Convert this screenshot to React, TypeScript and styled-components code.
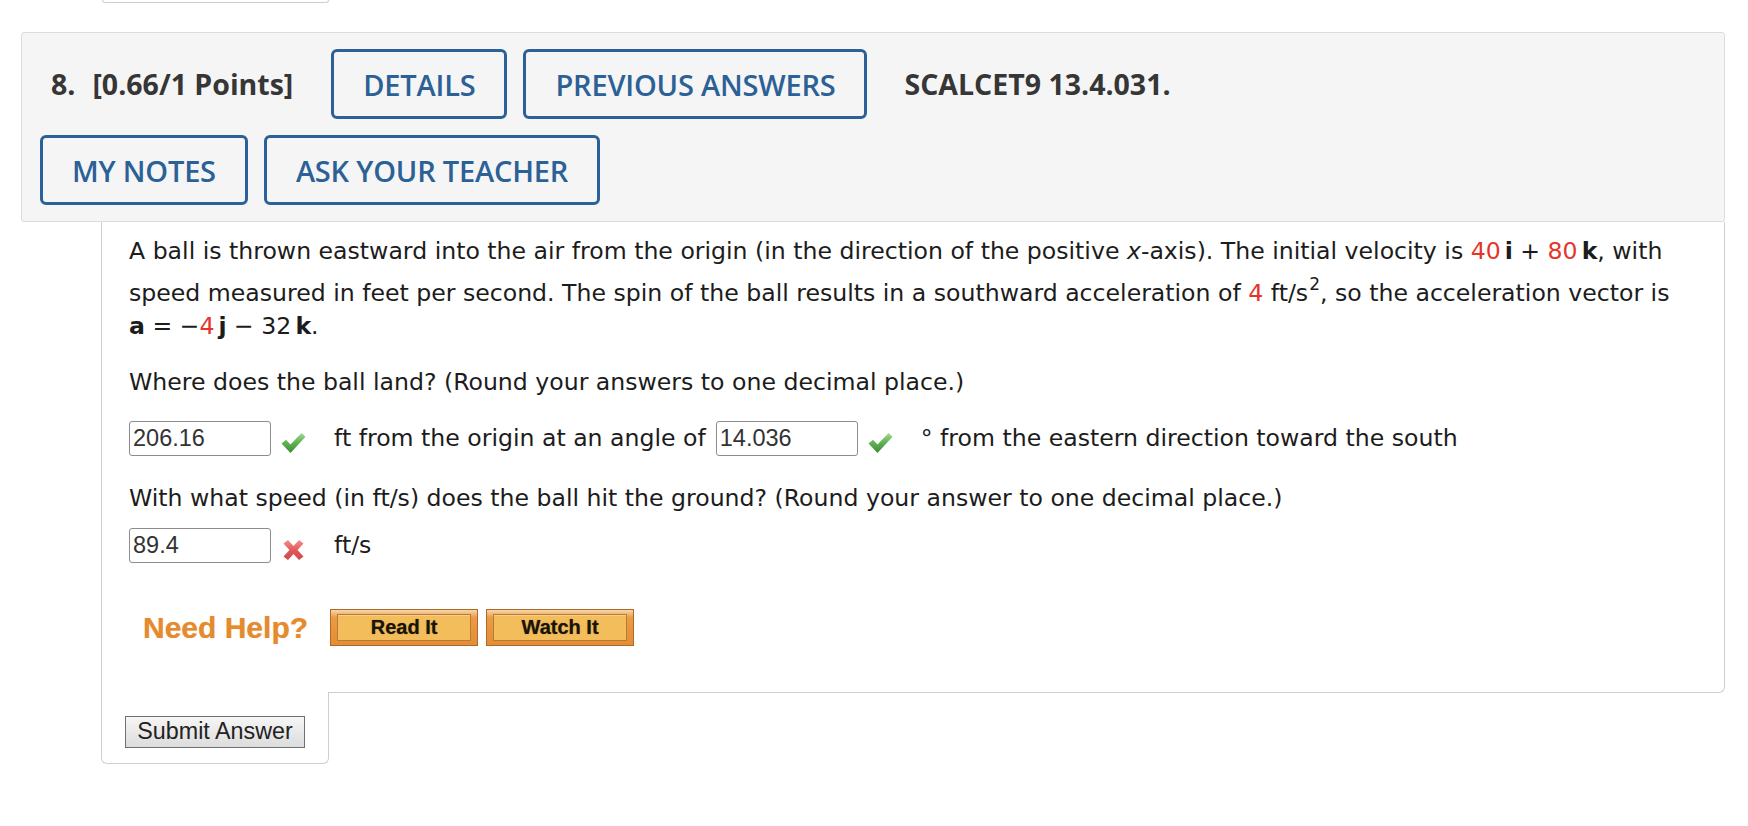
import React from "react";
import styled, { createGlobalStyle } from "styled-components";

const Global = createGlobalStyle`
  html, body { margin: 0; padding: 0; background: #ffffff; }
  body { font-family: "DejaVu Sans", Verdana, sans-serif; }
`;

const Page = styled.div`
  width: 1748px;
  min-height: 826px;
  background: #fff;
`;

const PrevTab = styled.div`
  box-sizing: border-box;
  margin-left: 102px;
  width: 227px;
  height: 3px;
  border: 1px solid #cfcfcf;
  border-top: none;
  border-radius: 0 0 6px 6px;
`;

const Question = styled.section`
  margin: 29px 0 0 21px;
  width: 1704px;
`;

const Header = styled.div`
  box-sizing: border-box;
  background: #f5f5f5;
  border: 1px solid #dcdcdc;
  border-radius: 3px;
  padding: 16px 18px;
  display: flex;
  flex-direction: column;
  gap: 16px;
  position: relative;
  z-index: 1;
`;

const HeaderRow = styled.div<{ $indent?: number }>`
  display: flex;
  align-items: center;
  padding-left: ${(p) => p.$indent ?? 0}px;
`;

const Label = styled.span<{ $gap?: number }>`
  font-family: "Open Sans", sans-serif;
  font-weight: 700;
  font-size: 28.5px;
  color: #363636;
  margin-right: ${(p) => p.$gap ?? 0}px;
  white-space: nowrap;
`;

const OutlineButton = styled.button<{ $gap?: number }>`
  box-sizing: border-box;
  height: 70px;
  padding: 0 29px;
  border: 3px solid #2b6196;
  border-radius: 6px;
  background: #f5f5f5;
  color: #2b6196;
  font-family: "Open Sans", sans-serif;
  font-weight: 600;
  font-size: 29px;
  letter-spacing: -0.2px;
  margin-right: ${(p) => p.$gap ?? 0}px;
  white-space: nowrap;
  cursor: pointer;
`;

const Body = styled.div`
  margin-left: 80px;
  width: 1624px;
`;

const Content = styled.div`
  box-sizing: border-box;
  border: 1px solid #cfcfcf;
  border-top: none;
  border-radius: 0 0 6px 0;
  padding: 13px 28px 46px 27px;
  color: #1c1c1c;
  font-family: "DejaVu Sans", Verdana, sans-serif;
  font-size: 23.6px;
  line-height: 33px;
`;

const Para = styled.p<{ $mt?: number }>`
  margin: ${(p) => p.$mt ?? 0}px 0 0 0;
`;

const Red = styled.span`
  color: #e5352a;
`;

const Vec = styled.b`
  font-weight: 700;
  margin-left: 4px;
`;

const NoWrap = styled.span`
  white-space: nowrap;
`;

const Sup = styled.sup`
  font-size: 17px;
  line-height: 33px;
  vertical-align: 10.5px;
  margin-left: 1px;
`;

const AnswerRow = styled.div<{ $mt?: number }>`
  display: flex;
  align-items: center;
  height: 40px;
  margin-top: ${(p) => p.$mt ?? 0}px;
  white-space: nowrap;
`;

const AnswerInput = styled.input`
  box-sizing: border-box;
  width: 142px;
  height: 35px;
  padding: 0 3px;
  border: 1px solid #8c8c8c;
  border-radius: 3px;
  background: #fff;
  font-family: "Liberation Sans", Arial, sans-serif;
  font-size: 23.5px;
  color: #333;
  outline: none;
`;

const Mark = styled.span`
  display: inline-flex;
  width: 25px;
  height: 22px;
  margin: 9px 28px 0 10px;
`;

const Gap = styled.span`
  display: inline-block;
  width: 10px;
`;

const HelpRow = styled.div`
  display: flex;
  align-items: center;
  margin-top: 43px;
  padding-left: 14px;
  gap: 8px;
`;

const NeedHelp = styled.span`
  font-family: "Liberation Sans", Arial, sans-serif;
  font-weight: 700;
  font-size: 30px;
  line-height: 37px;
  color: #e58b2f;
  margin-right: 14px;
  text-shadow: 0 0 1px rgba(227, 138, 48, 0.6);
`;

const HelpButton = styled.button`
  box-sizing: border-box;
  width: 148px;
  height: 37px;
  padding: 4px 6px;
  border: 1px solid #a86b2d;
  background: linear-gradient(#f9d6a6 0%, #eb9a45 22%, #e58d34 100%);
  display: flex;
  cursor: pointer;
`;

const HelpInner = styled.span`
  flex: 1;
  display: flex;
  align-items: center;
  justify-content: center;
  background: #f4bd5b;
  border: 1px solid #b57b3c;
  box-shadow: inset 0 1px 0 #f8d28a;
  font-family: "Liberation Sans", Arial, sans-serif;
  font-weight: 700;
  font-size: 20px;
  color: #1a1408;
  text-shadow: 0 0 1px rgba(0, 0, 0, 0.5);
`;

const SubmitTab = styled.div`
  box-sizing: border-box;
  position: relative;
  margin-top: -1px;
  width: 228px;
  height: 72px;
  padding: 24px 0 0 23px;
  background: #fff;
  border: 1px solid #cfcfcf;
  border-top: none;
  border-radius: 0 0 6px 6px;
`;

const SubmitButton = styled.button`
  box-sizing: border-box;
  width: 180px;
  height: 32px;
  padding: 0;
  border: 1px solid #707070;
  border-radius: 0;
  background: linear-gradient(#f6f6f6, #dcdcdc);
  font-family: "Liberation Sans", Arial, sans-serif;
  font-size: 23.3px;
  color: #222;
  cursor: pointer;
`;

const Check = () => (
  <svg width="25" height="22" viewBox="0 0 25 22">
    <defs>
      <linearGradient id="chk" x1="0" y1="0" x2="0" y2="1">
        <stop offset="0" stopColor="#a3dc92" />
        <stop offset="0.45" stopColor="#62b455" />
        <stop offset="1" stopColor="#3b8d35" />
      </linearGradient>
    </defs>
    <path
      d="M0.5 11.5 L5 7.8 L9.5 12.5 L20.5 1 L24.5 4.8 L9.5 21 Z"
      fill="url(#chk)"
    />
  </svg>
);

const Cross = () => (
  <svg width="25" height="22" viewBox="0 0 25 22">
    <defs>
      <linearGradient id="crs" x1="0" y1="0" x2="0" y2="1">
        <stop offset="0" stopColor="#f39090" />
        <stop offset="0.5" stopColor="#e25959" />
        <stop offset="1" stopColor="#d24848" />
      </linearGradient>
    </defs>
    <path
      d="M2.5 4.5 L7 1 L12.5 7 L18 1 L22.5 4.5 L16.5 11 L22.5 17.5 L18 21 L12.5 15 L7 21 L2.5 17.5 L8.5 11 Z"
      fill="url(#crs)"
    />
  </svg>
);

export default function App() {
  return (
    <Page>
      <Global />
      <PrevTab />
      <Question>
        <Header>
          <HeaderRow $indent={11}>
            <Label $gap={17}>8.</Label>
            <Label $gap={38}>[0.66/1 Points]</Label>
            <OutlineButton $gap={16}>DETAILS</OutlineButton>
            <OutlineButton $gap={37}>PREVIOUS ANSWERS</OutlineButton>
            <Label>SCALCET9 13.4.031.</Label>
          </HeaderRow>
          <HeaderRow>
            <OutlineButton $gap={16}>MY NOTES</OutlineButton>
            <OutlineButton>ASK YOUR TEACHER</OutlineButton>
          </HeaderRow>
        </Header>
        <Body>
          <Content>
            <Para>
              A ball is thrown eastward into the air from the origin (in the
              direction of the positive <i>x</i>-axis). The initial velocity is{" "}
              <NoWrap>
                <Red>40</Red>
                <Vec>i</Vec> + <Red>80</Red>
                <Vec>k</Vec>
              </NoWrap>
              , with speed measured in feet per second. The spin of the ball
              results in a southward acceleration of <Red>4</Red> ft/s
              <Sup>2</Sup>, so the acceleration vector is{" "}
              <NoWrap>
                <b>a</b> = −<Red>4</Red>
                <Vec>j</Vec> − 32<Vec>k</Vec>.
              </NoWrap>
            </Para>
            <Para $mt={23}>
              Where does the ball land? (Round your answers to one decimal
              place.)
            </Para>
            <AnswerRow $mt={20}>
              <AnswerInput readOnly value="206.16" />
              <Mark>
                <Check />
              </Mark>
              <span>ft from the origin at an angle of</span>
              <Gap />
              <AnswerInput readOnly value="14.036" />
              <Mark>
                <Check />
              </Mark>
              <span>° from the eastern direction toward the south</span>
            </AnswerRow>
            <Para $mt={23}>
              With what speed (in ft/s) does the ball hit the ground? (Round
              your answer to one decimal place.)
            </Para>
            <AnswerRow $mt={11}>
              <AnswerInput readOnly value="89.4" />
              <Mark>
                <Cross />
              </Mark>
              <span>ft/s</span>
            </AnswerRow>
            <HelpRow>
              <NeedHelp>Need Help?</NeedHelp>
              <HelpButton>
                <HelpInner>Read It</HelpInner>
              </HelpButton>
              <HelpButton>
                <HelpInner>Watch It</HelpInner>
              </HelpButton>
            </HelpRow>
          </Content>
          <SubmitTab>
            <SubmitButton>Submit Answer</SubmitButton>
          </SubmitTab>
        </Body>
      </Question>
    </Page>
  );
}
